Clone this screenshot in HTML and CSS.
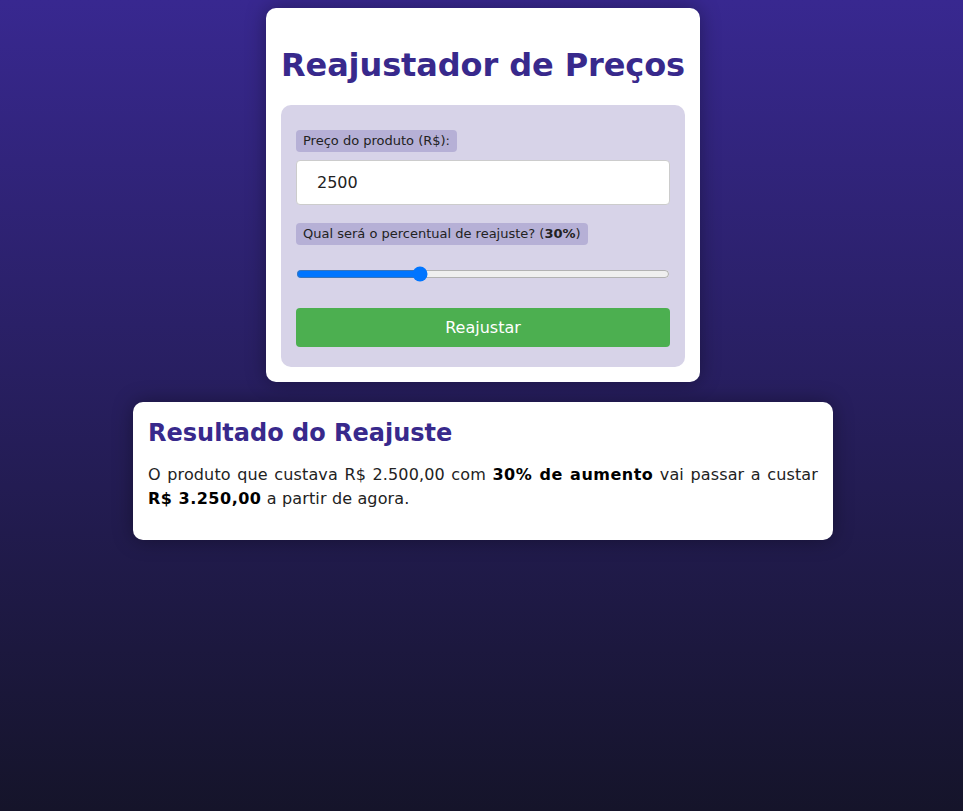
FILE: index.html
```
<!DOCTYPE html>
<html lang="pt-BR">
<head>
<meta charset="utf-8">
<title>Reajustador de Preços</title>
<link rel="stylesheet" href="styles.css">
</head>
<body>
<main class="page">
  <section class="card">
    <h1 class="title">Reajustador de Preços</h1>
    <form class="form-box">
      <label class="tag" for="preco">Preço do produto (R$):</label>
      <input class="price" id="preco" type="text" value="2500">
      <label class="tag" for="perc">Qual será o percentual de reajuste? (<strong>30%</strong>)</label>
      <input class="range" id="perc" type="range" min="0" max="100" step="0.1" value="32.4">
      <button class="btn" type="button">Reajustar</button>
    </form>
  </section>
  <section class="result">
    <h2 class="result-title">Resultado do Reajuste</h2>
    <p class="result-text">O produto que custava R$ 2.500,00 com <strong>30% de aumento</strong> vai passar a custar <strong>R$ 3.250,00</strong> a partir de agora.</p>
  </section>
</main>
</body>
</html>
```
FILE: styles.css
```
html, body {
  margin: 0;
  padding: 0;
}
body {
  min-height: 100vh;
  background: linear-gradient(to bottom, #382890 0%, #15142a 100%);
  font-family: "DejaVu Sans", Verdana, sans-serif;
  color: #222;
}
.page {
  display: flex;
  flex-direction: column;
  align-items: center;
  padding: 8px 0 0 3px;
  gap: 20px;
}
.card {
  background: #fff;
  border-radius: 10px;
  padding: 15px;
  box-shadow: 0 0 20px rgba(0, 0, 0, 0.35);
  width: fit-content;
}
.title {
  font-size: 32px;
  font-weight: bold;
  color: #38298c;
  margin: 23px 0 21px;
  text-align: center;
  white-space: nowrap;
  letter-spacing: -0.1px;
}
.form-box {
  background: #d7d3e8;
  border-radius: 10px;
  padding: 25px 15px 20px;
  display: flex;
  flex-direction: column;
  align-items: flex-start;
}
.tag {
  background: #b6b0d6;
  border-radius: 4px;
  font-size: 13px;
  padding: 2px 7px;
  line-height: 18px;
  color: #222;
}
.price {
  box-sizing: border-box;
  width: 100%;
  height: 45px;
  margin: 8px 0 18px;
  padding: 0 20px;
  border: 1px solid #ccc;
  border-radius: 4px;
  font-family: "DejaVu Sans", Verdana, sans-serif;
  font-size: 16px;
  color: #222;
  background: #fff;
}
.range {
  width: 100%;
  margin: 21px 0 26px;
  box-sizing: border-box;
}
.btn {
  width: 100%;
  height: 39px;
  border: none;
  border-radius: 4px;
  background: #4caf50;
  color: #fff;
  font-family: "DejaVu Sans", Verdana, sans-serif;
  font-size: 16px;
}
.result {
  box-sizing: border-box;
  width: 700px;
  background: #fff;
  border-radius: 10px;
  padding: 15px;
  box-shadow: 0 0 20px rgba(0, 0, 0, 0.35);
}
.result-title {
  margin: 0;
  padding-top: 2px;
  font-size: 24px;
  color: #38298c;
}
.result-text {
  margin: 16px 0 14px;
  font-size: 16px;
  line-height: 24px;
  text-align: justify;
  letter-spacing: 0.15px;
}
.result-text strong {
  color: #000;
  letter-spacing: 0.5px;
}
```
